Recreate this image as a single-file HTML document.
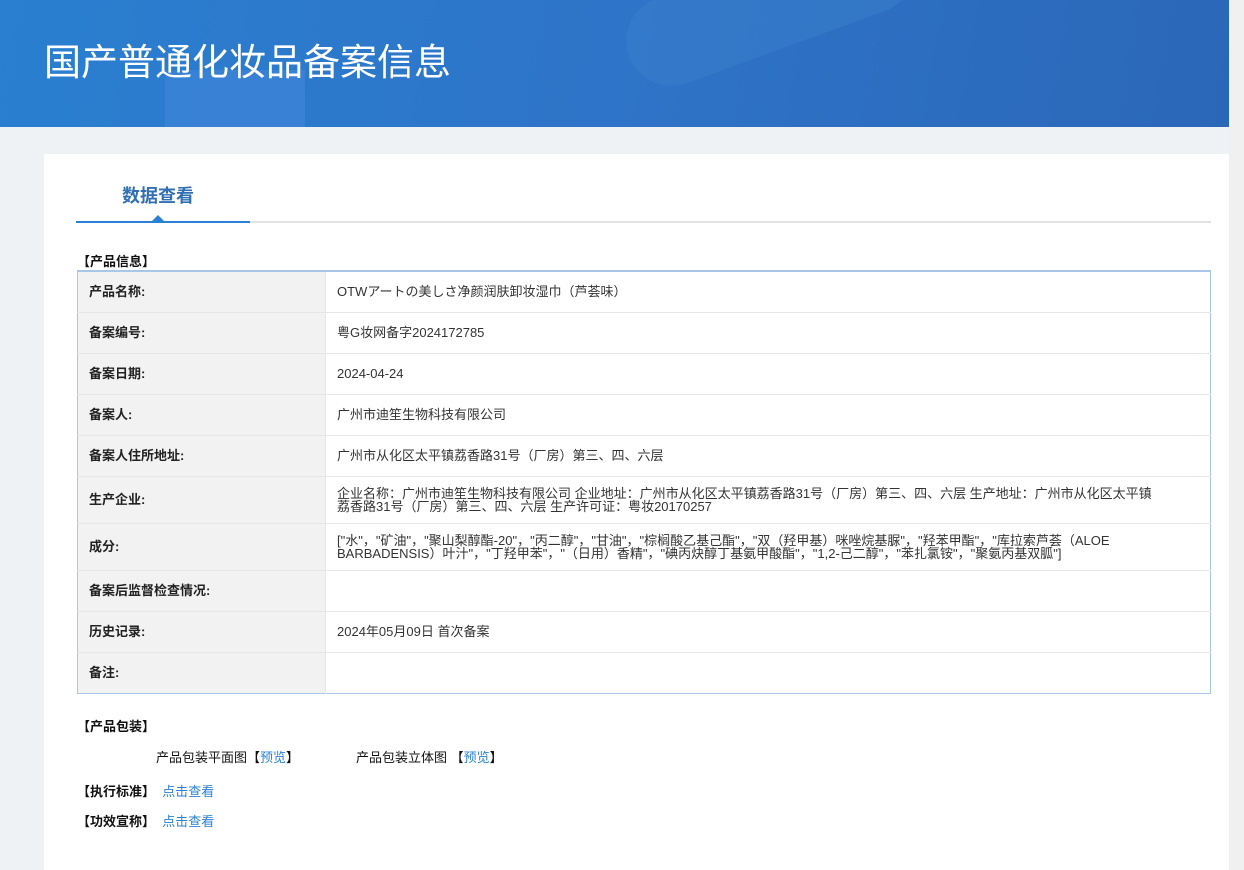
<!DOCTYPE html>
<html><head><meta charset="utf-8"><style>
*{margin:0;padding:0;box-sizing:border-box}
body{width:1244px;height:870px;overflow:hidden;background:#eef2f5;font-family:"Liberation Sans","Noto Sans CJK SC",sans-serif;font-size:13px;color:#333;position:relative}
.hdr{position:absolute;left:0;top:0;width:1229px;height:127px;background:linear-gradient(100deg,#2a7fd0 0%,#2e74c8 50%,#2b67b8 100%);overflow:hidden}
.hdr h1{position:absolute;left:44px;top:32px;color:#fff;font-size:37px;font-weight:normal;letter-spacing:0px}
.deco1{position:absolute;left:165px;top:70px;width:140px;height:60px;background:#3f84d8;opacity:.7}
.deco2{position:absolute;left:620px;top:-40px;width:300px;height:90px;border-radius:45px;background:#3a80cc;opacity:.5;transform:rotate(-20deg)}
.rs{position:absolute;left:1229px;top:0;width:15px;height:870px;background:#f0f0f0}
.card{position:absolute;left:44px;top:154px;width:1185px;height:716px;background:#fff}
.tab{position:absolute;left:78px;top:28px;font-size:18px;font-weight:bold;color:#2f6fb2}
.line{position:absolute;left:32px;top:67px;width:1135px;height:2px;background:#e2e2e2}
.line b{position:absolute;left:0;top:0;width:174px;height:2px;background:#2b82d4}
.tri{position:absolute;left:108px;top:61px;width:0;height:0;border-left:6px solid transparent;border-right:6px solid transparent;border-bottom:6px solid #2b82d4}
.sec{position:absolute;left:33px;font-weight:bold;font-size:13px;color:#111}
table{position:absolute;left:33px;top:116px;width:1134px;border-collapse:collapse;border:1px solid #a9c6e8;border-top:2px solid #a9c6e8}
td{border-top:1px solid #e6e6e6;height:41px;padding:0 40px 0 11px;vertical-align:middle;line-height:13px}
td.l{width:248px;background:#f2f2f2;font-weight:bold;color:#222;border-right:1px solid #e6e6e6;padding-right:11px}
tr.t td{height:47px}
a{color:#2b82d4;text-decoration:none}
.r{position:absolute;font-size:13px;color:#111}
</style></head><body>
<div class="hdr"><div class="deco1"></div><div class="deco2"></div><h1>国产普通化妆品备案信息</h1></div>
<div class="rs"></div>
<div class="card">
<div class="tab">数据查看</div>
<div class="line"><b></b></div><div class="tri"></div>
<div class="sec" style="top:97px">【产品信息】</div>
<table>
<tr><td class="l">产品名称:</td><td>OTWアートの美しさ净颜润肤卸妆湿巾（芦荟味）</td></tr>
<tr><td class="l">备案编号:</td><td>粤G妆网备字2024172785</td></tr>
<tr><td class="l">备案日期:</td><td>2024-04-24</td></tr>
<tr><td class="l">备案人:</td><td>广州市迪笙生物科技有限公司</td></tr>
<tr><td class="l">备案人住所地址:</td><td>广州市从化区太平镇荔香路31号（厂房）第三、四、六层</td></tr>
<tr class="t"><td class="l">生产企业:</td><td>企业名称：广州市迪笙生物科技有限公司 企业地址：广州市从化区太平镇荔香路31号（厂房）第三、四、六层 生产地址：广州市从化区太平镇<br>荔香路31号（厂房）第三、四、六层 生产许可证：粤妆20170257</td></tr>
<tr class="t"><td class="l">成分:</td><td>["水"，"矿油"，"聚山梨醇酯-20"，"丙二醇"，"甘油"，"棕榈酸乙基己酯"，"双（羟甲基）咪唑烷基脲"，"羟苯甲酯"，"库拉索芦荟（ALOE BARBADENSIS）叶汁"，"丁羟甲苯"，"（日用）香精"，"碘丙炔醇丁基氨甲酸酯"，"1,2-己二醇"，"苯扎氯铵"，"聚氨丙基双胍"]</td></tr>
<tr><td class="l">备案后监督检查情况:</td><td></td></tr>
<tr><td class="l">历史记录:</td><td>2024年05月09日 首次备案</td></tr>
<tr><td class="l">备注:</td><td></td></tr>
</table>
<div class="sec" style="top:562px">【产品包装】</div>
<div class="r" style="left:112px;top:593px">产品包装平面图【<a>预览</a>】</div>
<div class="r" style="left:312px;top:593px">产品包装立体图 【<a>预览</a>】</div>
<div class="sec" style="top:627px">【执行标准】 &nbsp;<a style="font-weight:normal">点击查看</a></div>
<div class="sec" style="top:657px">【功效宣称】 &nbsp;<a style="font-weight:normal">点击查看</a></div>
</div>
</body></html>
